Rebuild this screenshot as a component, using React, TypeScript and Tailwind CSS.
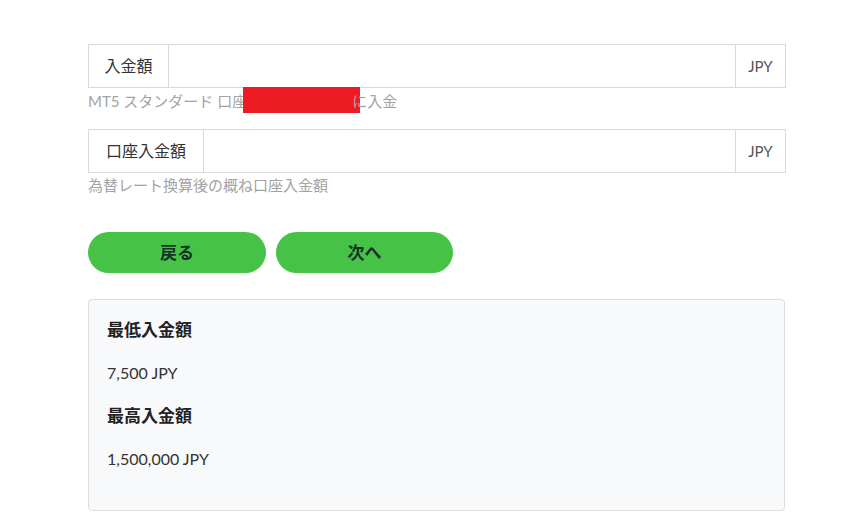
const font = { fontFamily: '"Lato", "Noto Sans CJK JP", sans-serif' };

function AmountField({ label, labelWidth }: { label: string; labelWidth: string }) {
  return (
    <div className="flex h-[44px] border border-[#d9d9d9] bg-white">
      <div className={`${labelWidth} flex items-center justify-center border-r border-[#d9d9d9] text-[16px] text-[#333]`}>
        {label}
      </div>
      <input className="flex-1 min-w-0 px-3 outline-none bg-transparent" />
      <div className="w-[50px] flex items-center justify-center border-l border-[#d9d9d9] text-[15px] text-[#555]">
        JPY
      </div>
    </div>
  );
}

export default function App() {
  return (
    <div className="min-h-screen bg-white pt-[44px] px-[88px]" style={font}>
      <div className="w-[698px]">
        <AmountField label="入金額" labelWidth="w-[80px]" />
        <p className="mt-[2px] h-[22px] flex items-center text-[15px] text-[#a3a3a3]">
          <span>MT5 スタンダード 口座</span>
          <span className="inline-block w-[117px] h-[26px] bg-[#ed1c24] -mt-[3px] -ml-[4px]" />
          <span className="-ml-[8px]">に入金</span>
        </p>

        <div className="mt-[17px]">
          <AmountField label="口座入金額" labelWidth="w-[115px]" />
        </div>
        <p className="mt-[2px] h-[20px] flex items-center text-[15px] text-[#a3a3a3]">
          為替レート換算後の概ね口座入金額
        </p>

        <div className="mt-[37px] flex gap-[10px]">
          <button className="w-[178px] h-[41px] rounded-full bg-[#46c346] text-[17px] font-bold text-[#17302a]">
            戻る
          </button>
          <button className="w-[177px] h-[41px] rounded-full bg-[#46c346] text-[17px] font-bold text-[#17302a]">
            次へ
          </button>
        </div>

        <div className="mt-[26px] w-[697px] h-[212px] rounded-[4px] border border-[#dedede] bg-[#f8f9fb] px-[18px] pt-[18px]">
          <h3 className="text-[17px] font-bold text-[#222] leading-[24px]">最低入金額</h3>
          <p className="mt-[20px] text-[16px] text-[#333] leading-[22px]">7,500 JPY</p>
          <h3 className="mt-[20px] text-[17px] font-bold text-[#222] leading-[24px]">最高入金額</h3>
          <p className="mt-[20px] text-[16px] text-[#333] leading-[22px]">1,500,000 JPY</p>
        </div>
      </div>
    </div>
  );
}
